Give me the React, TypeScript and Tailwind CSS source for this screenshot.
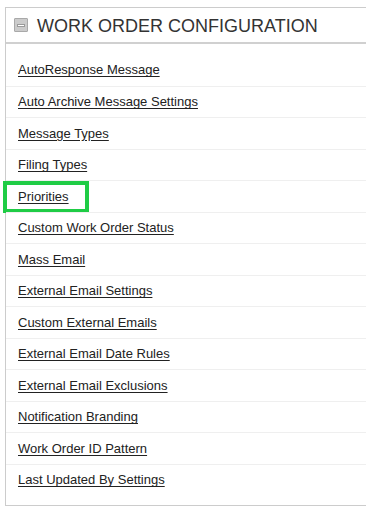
import React from "react";

const items = [
  "AutoResponse Message",
  "Auto Archive Message Settings",
  "Message Types",
  "Filing Types",
  "Priorities",
  "Custom Work Order Status",
  "Mass Email",
  "External Email Settings",
  "Custom External Emails",
  "External Email Date Rules",
  "External Email Exclusions",
  "Notification Branding",
  "Work Order ID Pattern",
  "Last Updated By Settings",
];

export default function App() {
  return (
    <div className="w-[366px] h-[511px] overflow-hidden bg-white" style={{ fontFamily: '"Liberation Sans", Arial, sans-serif' }}>
      <div className="ml-[5px] mt-[7px] w-[380px] border border-[#cccccc] bg-white">
        <div className="flex items-center h-[36px] border-b-2 border-[#d0d0d0] pl-[8px]">
          <span className="relative w-[14px] h-[14px] border border-[#a9a9a9] bg-[#cbcbcb] rounded-[1px] flex items-center justify-center">
            <span className="block w-[8px] h-[3px] bg-white border border-[#9a9a9a]" />
          </span>
          <span className="ml-[9px] text-[18px] leading-none text-[#333333] mt-[1px]">WORK ORDER CONFIGURATION</span>
        </div>
        <div className="pt-[10px] pb-[10px]">
          {items.map((t, i) => (
            <div
              key={t}
              className={`relative h-[31.5px] flex items-center pl-[12px] ${i > 0 ? "border-t border-[#efefef]" : ""}`}
            >
              <a href="#" className="text-[13px] leading-none text-[#222222] underline underline-offset-[2px]">
                {t}
              </a>
              {t === "Priorities" && (
                <div className="absolute left-[-3px] top-[0px] w-[86px] h-[32px] border-[4px] border-[#1fcc45] pointer-events-none" />
              )}
            </div>
          ))}
        </div>
      </div>
    </div>
  );
}
